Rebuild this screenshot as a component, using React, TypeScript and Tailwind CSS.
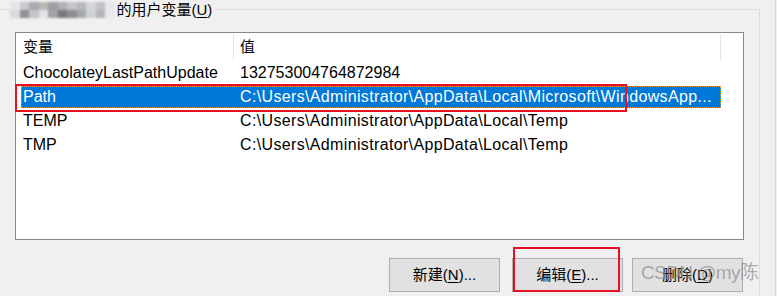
import React from "react";

// ── Data ────────────────────────────────────────────────────

const rows = [
    { name: "ChocolateyLastPathUpdate", value: "132753004764872984" },
    {
        name: "Path",
        value: "C:\\Users\\Administrator\\AppData\\Local\\Microsoft\\WindowsApp...",
        selected: true,
    },
    { name: "TEMP", value: "C:\\Users\\Administrator\\AppData\\Local\\Temp" },
    { name: "TMP", value: "C:\\Users\\Administrator\\AppData\\Local\\Temp" },
];

// blurred user name (mosaic)
const mosaic = [
    ["#e4e5e8", "#c9cace", "#a9abb0", "#b9b8b5", "#9c9fa6", "#b0b1b6", "#c4c5c9", "#b6b8bd", "#d5d6da", "#c0c2c7", "#e6e7ea"],
    ["#d9dadd", "#8f9196", "#c3c4c8", "#e2e2e6", "#a1a3a9", "#78787b", "#8c8e90", "#a4a7ac", "#d0d1d5", "#b3b5ba", "#e9e9ec"],
];

const font = { fontFamily: '"Liberation Sans", "Noto Sans CJK SC", sans-serif' };

function Mnemonic({ label, k, rest = "" }: { label: string; k: string; rest?: string }) {
    return (
        <span>
            {label}(<span className="underline underline-offset-2">{k}</span>){rest}
        </span>
    );
}

function WinButton({ children }: { children: React.ReactNode }) {
    return (
        <div className="w-[111px] h-[34px] flex items-center justify-center bg-[#e1e1e1] border border-[#adadad] text-[15px] text-black">
            {children}
        </div>
    );
}

// ── App ─────────────────────────────────────────────────────

export default function App() {
    return (
        <div className="relative w-[777px] h-[296px] overflow-hidden bg-[#f0f0f0] flex" style={font}>
            <div className="w-[775px] h-full">
                {/* Group box */}
                <div className="relative mt-[9px] w-[760px] h-[300px] border-t border-r border-[#dcdcdc]">
                    {/* legend */}
                    <div className="absolute -top-[10px] left-[10px] h-[20px] flex items-center bg-[#f0f0f0] pr-[3px]">
                        <div className="flex flex-col blur-[0.8px] mr-[2px]">
                            {mosaic.map((r, i) => (
                                <div key={i} className="flex">
                                    {r.map((c, j) => (
                                        <div key={j} className="w-[9.5px] h-[8px]" style={{ background: c }} />
                                    ))}
                                </div>
                            ))}
                        </div>
                        <span className="text-[15px] leading-[20px] text-black">
                            <Mnemonic label="的用户变量" k="U" />
                        </span>
                    </div>

                    {/* List view */}
                    <div className="ml-[15px] mt-[22px] w-[729px] h-[208px] border border-[#828790] bg-white">
                        <div className="h-[28px] flex items-stretch text-[15px] text-black">
                            <div className="w-[217px] pl-[7px] flex items-center">变量</div>
                            <div className="w-px bg-[#e5e5e5] my-[1px]" />
                            <div className="w-[486px] pl-[6px] flex items-center">值</div>
                            <div className="w-px bg-[#e5e5e5] my-[1px]" />
                        </div>
                        {rows.map((r) => (
                            <div key={r.name} className="h-[24px] pl-[5px] flex items-center text-[16px]">
                                <div
                                    className={
                                        r.selected
                                            ? "w-[700px] h-[22px] flex items-center bg-[#0078d7] text-white border border-dotted border-[#e8a040]"
                                            : "w-[700px] h-[22px] flex items-center text-black border border-transparent"
                                    }
                                >
                                    <div className="w-[218px] pl-[1px] whitespace-nowrap">{r.name}</div>
                                    <div
                                        className={
                                            r.value.startsWith("C:")
                                                ? "whitespace-nowrap tracking-[0.35px]"
                                                : "whitespace-nowrap"
                                        }
                                    >
                                        {r.value}
                                    </div>
                                </div>
                            </div>
                        ))}
                    </div>

                    {/* Buttons */}
                    <div className="flex mt-[18px] ml-[389px]">
                        <WinButton>
                            <Mnemonic label="新建" k="N" rest="..." />
                        </WinButton>
                        <div className="ml-[12px]">
                            <WinButton>
                                <Mnemonic label="编辑" k="E" rest="..." />
                            </WinButton>
                        </div>
                        <div className="ml-[9px]">
                            <WinButton>
                                <Mnemonic label="删除" k="D" />
                            </WinButton>
                        </div>
                    </div>
                </div>
            </div>
            <div className="w-px h-full bg-[#d4d4d4]" />

            {/* Annotations */}
            <div className="absolute left-[15px] top-[84px] w-[612px] h-[28px] border-2 border-[#e81123]" />
            <div className="absolute left-[513px] top-[247px] w-[107px] h-[45px] border-2 border-[#e81123]" />

            {/* Watermark */}
            <div className="absolute left-[641px] top-[261px] text-[19px] leading-[24px] tracking-[-0.6px] text-[rgba(140,140,140,0.7)] whitespace-nowrap">
                CSDN @my陈
            </div>
        </div>
    );
}
